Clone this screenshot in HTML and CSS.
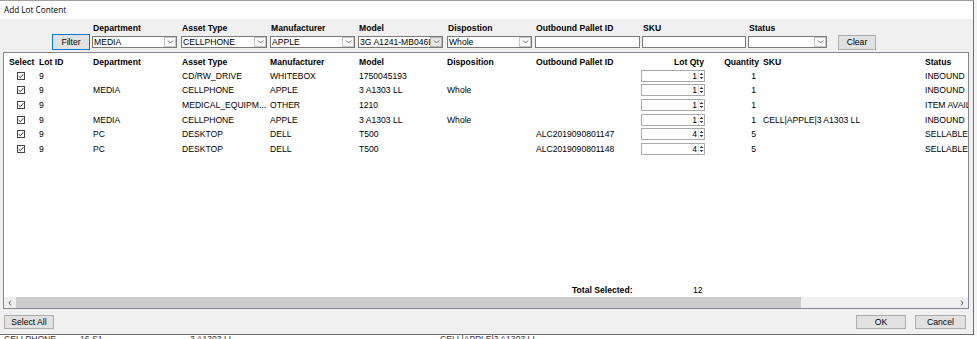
FILE: index.html
```html
<!DOCTYPE html>
<html>
<head>
    <title>Add Lot Content</title>
    <link rel="stylesheet" href="styles.css">
</head>
<body>
    <div class="window">
        <div class="titlebar">Add Lot Content</div>

        <div class="filters">
            <span></span>
            <label>Department</label>
            <label>Asset Type</label>
            <label>Manufacturer</label>
            <label>Model</label>
            <label>Dispostion</label>
            <label>Outbound Pallet ID</label>
            <label>SKU</label>
            <label>Status</label>
            <span></span>

            <button class="btn btn-filter">Filter</button>
            <div class="combo w85"><span class="value">MEDIA</span><span class="arrow"><svg width="7" height="4" viewBox="0 0 7 4"><path d="M1 0.5 L3.5 3 L6 0.5" stroke="#707070" fill="none"/></svg></span></div>
            <div class="combo w86"><span class="value">CELLPHONE</span><span class="arrow"><svg width="7" height="4" viewBox="0 0 7 4"><path d="M1 0.5 L3.5 3 L6 0.5" stroke="#707070" fill="none"/></svg></span></div>
            <div class="combo w85"><span class="value">APPLE</span><span class="arrow"><svg width="7" height="4" viewBox="0 0 7 4"><path d="M1 0.5 L3.5 3 L6 0.5" stroke="#707070" fill="none"/></svg></span></div>
            <div class="combo w85"><span class="value">3G A1241-MB046LL</span><span class="arrow arrow-hot"><svg width="7" height="4" viewBox="0 0 7 4"><path d="M1 0.5 L3.5 3 L6 0.5" stroke="#707070" fill="none"/></svg></span></div>
            <div class="combo w85"><span class="value">Whole</span><span class="arrow"><svg width="7" height="4" viewBox="0 0 7 4"><path d="M1 0.5 L3.5 3 L6 0.5" stroke="#707070" fill="none"/></svg></span></div>
            <div class="textbox w105"></div>
            <div class="textbox w104"></div>
            <div class="combo w79"><span class="value"></span><span class="arrow"><svg width="7" height="4" viewBox="0 0 7 4"><path d="M1 0.5 L3.5 3 L6 0.5" stroke="#707070" fill="none"/></svg></span></div>
            <button class="btn btn-clear">Clear</button>
        </div>

        <div class="grid">
            <div class="table">
                <div class="row head">
                    <div class="cell c-select">Select</div>
                    <div class="cell">Lot ID</div>
                    <div class="cell">Department</div>
                    <div class="cell">Asset Type</div>
                    <div class="cell">Manufacturer</div>
                    <div class="cell">Model</div>
                    <div class="cell">Disposition</div>
                    <div class="cell">Outbound Pallet ID</div>
                    <div class="cell num">Lot Qty</div>
                    <div class="cell num qty-head">Quantity</div>
                    <div class="cell">SKU</div>
                    <div class="cell">Status</div>
                </div>
                <div id="rows"></div>
            </div>
            <div class="total">
                <span class="total-label">Total Selected:</span>
                <span class="total-value">12</span>
            </div>
            <div class="hscroll">
                <span class="sb-btn"><svg width="4" height="6" viewBox="0 0 4 6"><path d="M3 0.5 L1 3 L3 5.5" stroke="#606060" fill="none"/></svg></span>
                <span class="sb-thumb"></span>
                <span class="sb-track"></span>
                <span class="sb-btn"><svg width="4" height="6" viewBox="0 0 4 6"><path d="M1 0.5 L3 3 L1 5.5" stroke="#606060" fill="none"/></svg></span>
            </div>
        </div>

        <div class="footer">
            <button class="btn btn-wide">Select All</button>
            <div class="footer-right">
                <button class="btn btn-wide">OK</button>
                <button class="btn btn-cancel">Cancel</button>
            </div>
        </div>
    </div>

    <div class="under">
        <span class="u1">CELLPHONE</span>
        <span class="u2">16 S1</span>
        <span class="u3">3 A1303 LL</span>
        <span class="u4">CELL|APPLE|3 A1303 LL</span>
    </div>

    <script>
        const items = [
            { lot: 9, dept: '', asset: 'CD/RW_DRIVE', manuf: 'WHITEBOX', model: '1750045193', disp: '', pallet: '', lotQty: 1, qty: 1, sku: '', status: 'INBOUND' },
            { lot: 9, dept: 'MEDIA', asset: 'CELLPHONE', manuf: 'APPLE', model: '3 A1303 LL', disp: 'Whole', pallet: '', lotQty: 1, qty: 1, sku: '', status: 'INBOUND' },
            { lot: 9, dept: '', asset: 'MEDICAL_EQUIPM...', manuf: 'OTHER', model: '1210', disp: '', pallet: '', lotQty: 1, qty: 1, sku: '', status: 'ITEM AVAILABLE' },
            { lot: 9, dept: 'MEDIA', asset: 'CELLPHONE', manuf: 'APPLE', model: '3 A1303 LL', disp: 'Whole', pallet: '', lotQty: 1, qty: 1, sku: 'CELL|APPLE|3 A1303 LL', status: 'INBOUND' },
            { lot: 9, dept: 'PC', asset: 'DESKTOP', manuf: 'DELL', model: 'T500', disp: '', pallet: 'ALC2019090801147', lotQty: 4, qty: 5, sku: '', status: 'SELLABLE' },
            { lot: 9, dept: 'PC', asset: 'DESKTOP', manuf: 'DELL', model: 'T500', disp: '', pallet: 'ALC2019090801148', lotQty: 4, qty: 5, sku: '', status: 'SELLABLE' }
        ];

        const check = '<span class="check"><svg width="6" height="6" viewBox="0 0 6 6"><path d="M0.6 3 L2.3 4.7 L5.4 1.2" stroke="#333" fill="none"/></svg></span>';
        const spin = '<span class="spin"><svg width="5" height="10" viewBox="0 0 5 10"><path d="M0.5 4 L2.5 2 L4.5 4Z M0.5 6 L2.5 8 L4.5 6Z" fill="#333"/></svg></span>';

        const container = document.getElementById('rows');
        items.forEach(item => {
            const div = document.createElement('div');
            div.className = 'row';
            div.innerHTML = `
                <div class="cell c-select">${check}</div>
                <div class="cell">${item.lot}</div>
                <div class="cell">${item.dept}</div>
                <div class="cell">${item.asset}</div>
                <div class="cell">${item.manuf}</div>
                <div class="cell">${item.model}</div>
                <div class="cell">${item.disp}</div>
                <div class="cell">${item.pallet}</div>
                <div class="cell c-lotqty"><span class="updown"><span class="updown-val">${item.lotQty}</span>${spin}</span></div>
                <div class="cell num">${item.qty}</div>
                <div class="cell">${item.sku}</div>
                <div class="cell">${item.status}</div>
            `;
            container.appendChild(div);
        });
    </script>
</body>
</html>
```

FILE: styles.css
```css
* {
    box-sizing: border-box;
    margin: 0;
    padding: 0;
}

body {
    font-family: 'Liberation Sans', Arial, sans-serif;
    font-size: 8.6px;
    color: #000;
    background: #f4f4f4;
    width: 977px;
    height: 339px;
    overflow: hidden;
}

.window {
    width: 974px;
    height: 335px;
    background: #f0f0f0;
    border-top: 1px solid #a0a0a0;
    border-right: 1px solid #6e6e6e;
    border-bottom: 1px solid #6e6e6e;
    display: flex;
    flex-direction: column;
}

.titlebar {
    height: 18px;
    background: #fff;
    font-family: 'Open Sans', 'Noto Sans', sans-serif;
    font-size: 8.2px;
    line-height: 18px;
    padding-left: 4px;
}

/* filter strip */
.filters {
    height: 33px;
    padding: 3px 0 2px 52px;
    display: grid;
    grid-template-columns: 40px 89px 89px 88px 89px 88px 107px 106px 90px 38px;
    grid-template-rows: 12px 16px;
    align-items: center;
}

.filters label {
    font-weight: bold;
    padding-left: 1px;
    line-height: 12px;
}

.combo,
.textbox {
    height: 12px;
    background: #fff;
    border: 1px solid #7a7a7a;
}

.combo {
    display: flex;
}

.combo .value {
    flex: 1;
    overflow: hidden;
    white-space: nowrap;
    line-height: 10px;
    padding-left: 1px;
}

.combo .arrow {
    width: 12px;
    border: 1px solid #c6c6c6;
    display: flex;
    align-items: center;
    justify-content: center;
    background: #fafafa;
}

.combo .arrow-hot {
    background: #e6e6e6;
    border-color: #b4b4b4;
}

.w79 { width: 79px; }
.w85 { width: 85px; }
.w86 { width: 86px; }
.w104 { width: 104px; }
.w105 { width: 105px; }

.btn {
    font-family: 'Liberation Sans', Arial, sans-serif;
    font-size: 8.6px;
    color: #000;
    background: #e1e1e1;
    border: 1px solid #adadad;
    height: 14px;
    line-height: 12px;
}

.btn-filter {
    width: 38px;
    height: 16px;
    border-color: #0078d7;
}

.btn-clear {
    width: 38px;
    height: 15px;
}

.btn-wide {
    width: 50px;
}

.btn-cancel {
    width: 51px;
}

/* data grid */
.grid {
    height: 257px;
    margin: 0 4px 0 3px;
    background: #fff;
    border: 1px solid #828790;
    display: flex;
    flex-direction: column;
}

.table {
    flex: 1;
    overflow: hidden;
}

.row {
    display: grid;
    grid-template-columns: 32px 54px 89px 88px 89px 88px 89px 106px 69px 52px 162px 88px;
    height: 14.6px;
    align-items: center;
    white-space: nowrap;
}

.row.head {
    height: 15.5px;
    padding-top: 3px;
    align-items: start;
    font-weight: bold;
    line-height: 12.5px;
}

.cell {
    padding-left: 3px;
    overflow: hidden;
}

.cell.num {
    text-align: right;
    padding-right: 4px;
}

.cell.qty-head {
    padding-right: 1px;
}

.c-select {
    padding-left: 5px;
}

.check {
    display: flex;
    align-items: center;
    justify-content: center;
    width: 8px;
    height: 8px;
    margin-left: 8px;
    border: 1px solid #444;
}

.c-lotqty {
    padding-left: 2px;
}

.updown {
    display: flex;
    width: 64px;
    height: 12px;
    border: 1px solid #a9a9a9;
    line-height: 10px;
}

.updown-val {
    flex: 1;
    text-align: right;
    padding-right: 1px;
}

.spin {
    width: 6px;
    display: flex;
    align-items: center;
    justify-content: center;
    border-left: 1px solid #e0e0e0;
}

.total {
    height: 14px;
    display: flex;
    align-items: center;
    line-height: 14px;
    padding-left: 568px;
}

.total-label {
    font-weight: bold;
    width: 121px;
}

.hscroll {
    height: 11px;
    display: flex;
    background: #f0f0f0;
}

.sb-btn {
    width: 12px;
    display: flex;
    align-items: center;
    justify-content: center;
}

.sb-thumb {
    width: 785px;
    background: #cdcdcd;
}

.sb-track {
    flex: 1;
}

/* bottom buttons */
.footer {
    flex: 1;
    display: flex;
    justify-content: space-between;
    align-items: flex-start;
    padding: 6px 7px 0 4px;
}

.footer-right {
    display: flex;
    gap: 9px;
}

/* what shows of the form behind the dialog */
.under {
    height: 4px;
    overflow: hidden;
    background: #fff;
    display: flex;
    line-height: 8px;
    color: #333;
    white-space: nowrap;
}

.u1 { width: 80px; padding-left: 4px; }
.u2 { width: 110px; }
.u3 { width: 250px; }
```
